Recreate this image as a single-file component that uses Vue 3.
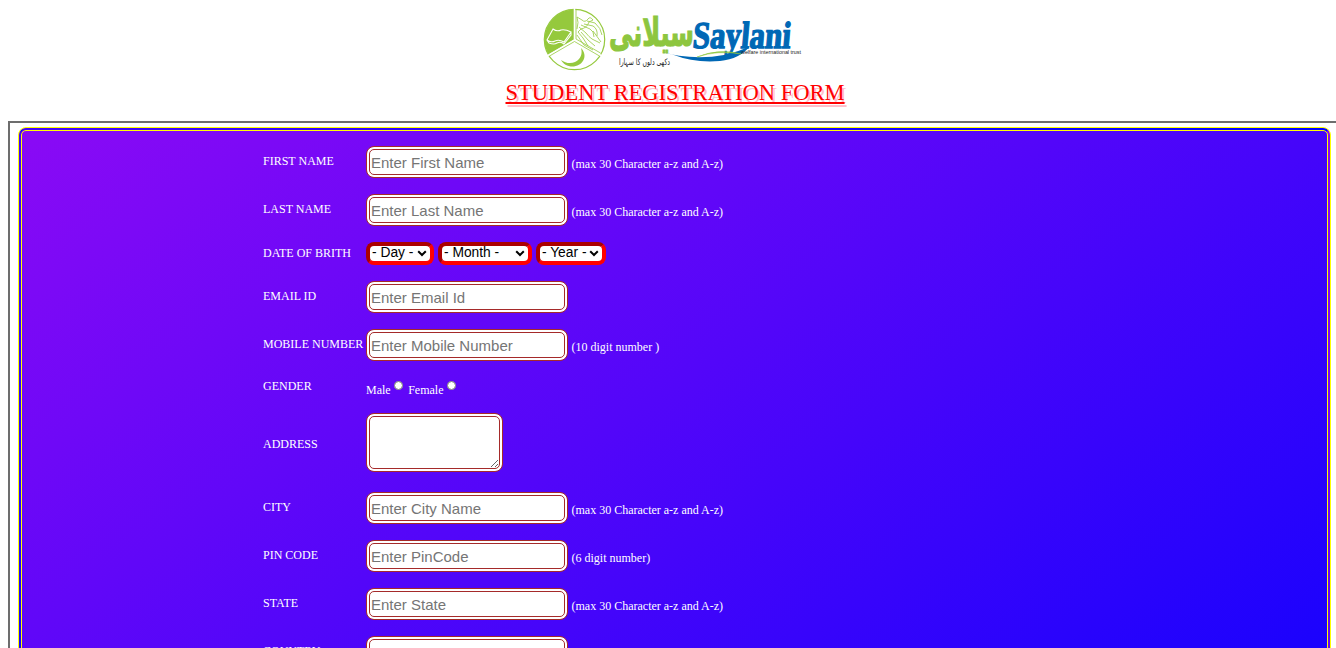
<script setup>
const nameHint = '(max 30 Character a-z and A-z)'
const rows = [
  { label: 'FIRST NAME', kind: 'text', placeholder: 'Enter First Name', hint: nameHint },
  { label: 'LAST NAME', kind: 'text', placeholder: 'Enter Last Name', hint: nameHint },
  { label: 'DATE OF BRITH', kind: 'date' },
  { label: 'EMAIL ID', kind: 'text', placeholder: 'Enter Email Id', hint: '' },
  { label: 'MOBILE NUMBER', kind: 'text', placeholder: 'Enter Mobile Number', hint: '(10 digit number )' },
  { label: 'GENDER', kind: 'gender' },
  { label: 'ADDRESS', kind: 'area' },
  { label: 'CITY', kind: 'text', placeholder: 'Enter City Name', hint: nameHint },
  { label: 'PIN CODE', kind: 'text', placeholder: 'Enter PinCode', hint: '(6 digit number)' },
  { label: 'STATE', kind: 'text', placeholder: 'Enter State', hint: nameHint },
  { label: 'COUNTRY', kind: 'text', placeholder: 'Enter Country', hint: '' },
]
const dateParts = [
  { name: 'day', text: '- Day -' },
  { name: 'month', text: '- Month -' },
  { name: 'year', text: '- Year -' },
]
</script>

<template>
  <main class="page">
    <header class="head">
      <svg class="logo" width="290" height="75" viewBox="0 0 290 75">
        <circle cx="44.500" cy="39.500" r="30" fill="#fff" />
        <path d="M44.500 39.500V9.500A30 30 0 0 0 18.500 54.500Z" fill="#95c93d" />
        <circle cx="44.500" cy="39.500" r="30.200" fill="none" stroke="#95c93d" stroke-width="1.200" />
        <path d="M44.500 8V40L18 55.500M44.500 40L71 55.500" fill="none" stroke="#fff" stroke-width="1.600" />
        <path d="M46 9.500V39L70.500 53M44.500 41.500L19.500 56M44.500 41.500L69.500 56" fill="none" stroke="#95c93d" stroke-width=".8" />
        <path d="M17 40L23 29Q27 32 31 30Q35 29 41 32L34 42Q29 39 25 41Q21 43 17 40ZM17 40L19 43Q24 45 27 43Q31 41 34 44L41 35V32" fill="none" stroke="#fff" stroke-width="1.100" />
        <path d="M51 48C58 55 54 65 44 66.500C38 67 33 64 31 60C37 64.500 45 64 49 59C52 55.500 52 51.500 51 48Z" fill="#95c93d" />
        <g fill="none" stroke="#95c93d" stroke-width=".8">
          <path d="M47 29Q49 22 47 17L52 20Q55 23 58 19Q60 16 63 20L59 22Q57 28 51 29L48 32L53 38L58 46" />
          <path d="M49 27L56 33Q59 37 62 39L70 43M51 25L60 29Q64 31 64 37M54 24L63 26Q68 29 67 36" />
          <path d="M57 21L65 23Q71 28 72 35M47 35L54 45L63 50M51 32L58 40L65 46M63 31L71 42" />
        </g>
        <text class="urdu" x="79" y="46" textLength="85" lengthAdjust="spacingAndGlyphs">سیلانی</text>
        <text class="brand" transform="translate(162 48) skewX(-5)" textLength="98" lengthAdjust="spacingAndGlyphs">Saylani</text>
        <path d="M128 51Q162 61 194 55Q208 52 220 46Q210 59 190 61Q164 63 144 55Z" fill="#0068b5" />
        <path d="M167 57Q189 48 211 54Q187 50 167 57Z" fill="#8dc63f" stroke="#8dc63f" stroke-width=".5" />
        <text class="motto" x="89" y="65" textLength="51" lengthAdjust="spacingAndGlyphs">دکھی دلوں کا سہارا</text>
        <text class="trust" x="211" y="54" textLength="60" lengthAdjust="spacingAndGlyphs">welfare international trust</text>
      </svg>
      <h1 class="title">STUDENT REGISTRATION FORM</h1>
    </header>
    <section class="frame">
      <form class="panel">
        <div v-for="row in rows" :key="row.label" class="row" :class="row.kind">
          <span class="label">{{ row.label }}</span>
          <template v-if="row.kind === 'text'">
            <input class="field" type="text" :placeholder="row.placeholder">
            <span class="hint">{{ row.hint }}</span>
          </template>
          <div v-else-if="row.kind === 'date'" class="selects">
            <div v-for="part in dateParts" :key="part.name" class="pick" :class="part.name">
              <select><option>{{ part.text }}</option></select>
              <svg class="arrow" width="10" height="7" viewBox="0 0 10 7">
                <path d="M1.200 1.200L5 5L8.800 1.200" fill="none" stroke="#000" stroke-width="2" />
              </svg>
            </div>
          </div>
          <div v-else-if="row.kind === 'gender'" class="choices">
            <label>Male</label><input type="radio" name="gender">
            <label class="female">Female</label><input type="radio" name="gender">
          </div>
          <textarea v-else class="address"></textarea>
        </div>
      </form>
    </section>
  </main>
</template>

<style>
body {
  background: #fff;
}
</style>

<style scoped>
.page {
  width: 1336px;
  height: 648px;
  overflow: hidden;
  box-sizing: border-box;
  padding-left: 8px;
  font-family: "Liberation Serif", "Times New Roman", serif;
}
.head {
  display: flex;
  flex-direction: column;
  height: 121px;
}
.logo {
  display: block;
  margin-left: 522px;
  flex: none;
}
.urdu {
  font: bold 39px "DejaVu Sans", sans-serif;
  fill: #8dc63f;
  stroke: #8dc63f;
  stroke-width: 1.2px;
}
.brand {
  font: bold 38px "Liberation Serif", serif;
  fill: #0068b5;
  stroke: #0068b5;
  stroke-width: 1.4px;
}
.motto {
  font: 9px "DejaVu Sans", sans-serif;
  fill: #222;
}
.trust {
  font: 5.5px "Liberation Sans", sans-serif;
  fill: #222;
}
.title {
  margin: 5px 0 0 497.5px;
  font-size: 22.55px;
  line-height: 26px;
  font-weight: 400;
  color: red;
  text-decoration: underline;
  text-shadow: 2px 3px pink;
  white-space: nowrap;
}
.frame {
  box-sizing: border-box;
  width: 1344px;
  height: 900px;
  border: 2px solid;
  border-color: #6d6d6d #b5b5b5 #b5b5b5 #6d6d6d;
  padding: 4px 0 0 8px;
}
.panel {
  box-sizing: border-box;
  width: 1313px;
  height: 850px;
  border: 4px double yellow;
  border-radius: 8px;
  padding: 7px 0 0 241px;
  background-image: linear-gradient(to bottom right, #8a0af5, blue);
  color: #fff;
  font-size: 12px;
}
.row {
  display: grid;
  grid-template-columns: 103px 202px 1fr;
  height: 48px;
  align-items: center;
}
.row.date {
  height: 39px;
}
.row.gender {
  height: 36px;
}
.row.area {
  height: 79px;
}
.label {
  line-height: 14px;
  white-space: nowrap;
  position: relative;
  top: -1px;
}
.hint {
  line-height: 14px;
  margin: 3px 0 0 3.5px;
}
.field {
  box-sizing: border-box;
  width: 202px;
  height: 32px;
  margin: 0;
  padding: 1px;
  border: 4px double brown;
  border-radius: 8px;
  background: #fff;
  font: 15px "Liberation Sans", Arial, sans-serif;
}
.field::placeholder {
  color: #757575;
}
.selects {
  display: flex;
  gap: 4px;
  grid-column: 2 / 4;
}
.pick {
  position: relative;
  height: 23px;
}
select {
  display: block;
  appearance: none;
  box-sizing: border-box;
  width: 100%;
  height: 23px;
  margin: 0;
  padding: 0 0 1px 2px;
  border: 4px inset red;
  border-radius: 8px;
  background: #fff;
  color: #000;
  font: 13.8px/14px "Liberation Sans", Arial, sans-serif;
}
.arrow {
  position: absolute;
  right: 7px;
  top: 8px;
}
.day {
  width: 68px;
}
.month {
  width: 94px;
}
.year {
  width: 70px;
}
.choices {
  display: flex;
  align-items: center;
  grid-column: 2 / 4;
  height: 14px;
  margin-top: 6px;
}
.choices input {
  width: 9px;
  height: 9px;
  margin: 0 0 10px 3.5px;
}
.female {
  margin-left: 5px;
}
.address {
  box-sizing: border-box;
  width: 137px;
  height: 59px;
  margin: 0 0 4px;
  border: 4px double brown;
  border-radius: 8px;
  background: #fff;
}
</style>
